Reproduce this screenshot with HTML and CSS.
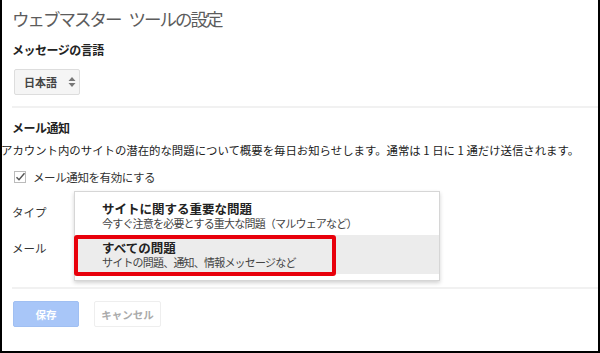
FILE: index.html
```html
<!DOCTYPE html>
<html lang="ja">
<head>
<meta charset="utf-8">
<link rel="stylesheet" href="styles.css">
</head>
<body>
<div class="frame">
  <div class="content">
    <h1 class="title">ウェブマスター ツールの設定</h1>
    <div class="label lang-label">メッセージの言語</div>
    <div class="select">
      <span>日本語</span>
      <svg class="arrows" width="8" height="12" viewBox="0 0 8 12"><path d="M4 1 L7.5 5 H0.5 Z M4 11 L7.5 7 H0.5 Z" fill="#777"/></svg>
    </div>
    <div class="rule rule-top"></div>
    <div class="label notify-label">メール通知</div>
    <p class="desc">アカウント内のサイトの潜在的な問題について概要を毎日お知らせします。通常は 1 日に 1 通だけ送信されます。</p>
    <div class="check-row">
      <svg class="check" width="12" height="12" viewBox="0 0 12 12"><rect x="0.5" y="0.5" width="11" height="11" fill="#fff" stroke="#bbb"/><path d="M2.5 6.2 L5 8.8 L10.5 2.2" fill="none" stroke="#555" stroke-width="1.4"/></svg>
      <span>メール通知を有効にする</span>
    </div>
    <div class="field type-row">タイプ</div>
    <div class="field mail-row">メール</div>
    <div class="rule rule-bottom"></div>
    <div class="buttons">
      <button class="btn save">保存</button>
      <button class="btn cancel">キャンセル</button>
    </div>
  </div>
  <div class="menu">
    <div class="item">
      <div class="item-title">サイトに関する重要な問題</div>
      <div class="item-sub">今すぐ注意を必要とする重大な問題（マルウェアなど）</div>
    </div>
    <div class="item active">
      <div class="item-title">すべての問題</div>
      <div class="item-sub">サイトの問題、通知、情報メッセージなど</div>
    </div>
  </div>
  <div class="highlight"></div>
</div>
</body>
</html>
```

FILE: styles.css
```css
html, body {
  margin: 0;
  padding: 0;
  background: #fff;
}
body {
  font-family: "Noto Sans CJK JP", "Noto Sans", sans-serif;
  color: #222;
}
.frame {
  position: relative;
  width: 600px;
  height: 353px;
  box-sizing: border-box;
  border-left: 2px solid #000;
  border-right: 2px solid #000;
  border-bottom: 2px solid #000;
  overflow: hidden;
}
.content {
  padding-left: 10px;
}
.title {
  margin: 0;
  height: 38px;
  line-height: 38px;
  font-size: 17.5px;
  font-weight: 400;
  letter-spacing: -2px;
  word-spacing: 6px;
  color: #5c5c5c;
}
.label {
  height: 20px;
  line-height: 20px;
  font-size: 12px;
  font-weight: 700;
  letter-spacing: -0.5px;
  color: #222;
}
.lang-label {
  margin-top: 2px;
}
.select {
  margin-top: 9px;
  margin-left: 2px;
  width: 66px;
  height: 26px;
  box-sizing: border-box;
  border: 1px solid #ddd;
  border-radius: 2px;
  background: #f5f5f5;
  display: flex;
  align-items: center;
  padding-left: 9px;
  font-size: 11px;
  font-weight: 700;
  color: #444;
}
.arrows {
  margin-left: 11px;
}
.rule {
  height: 2px;
  background: #f1f1f1;
}
.rule-top {
  margin-top: 11px;
}
.notify-label {
  margin-top: 10px;
}
.desc {
  margin: 2px 0 0 -11px;
  height: 20px;
  line-height: 20px;
  font-size: 11.4px;
  color: #222;
  white-space: nowrap;
}
.check-row {
  margin-top: 7px;
  height: 20px;
  display: flex;
  align-items: center;
  margin-left: 2px;
  font-size: 11.5px;
  letter-spacing: -0.4px;
  color: #333;
}
.check {
  margin-right: 7px;
}
.field {
  height: 20px;
  line-height: 20px;
  font-size: 11.5px;
  color: #333;
}
.type-row {
  margin-top: 15px;
}
.mail-row {
  margin-top: 16px;
}
.rule-bottom {
  margin-top: 29px;
}
.buttons {
  margin-top: 12px;
  display: flex;
  gap: 15px;
  margin-left: 1px;
}
.btn {
  height: 26px;
  box-sizing: border-box;
  border-radius: 2px;
  font-family: "Noto Sans CJK JP", sans-serif;
  font-size: 10.5px;
  font-weight: 700;
  padding: 0;
}
.save {
  width: 66px;
  background: #a8c6f8;
  border: 1px solid #a0bff2;
  color: #fff;
}
.cancel {
  width: 67px;
  background: #fff;
  border: 1px solid #eee;
  color: #aaa;
}
.menu {
  position: absolute;
  left: 72px;
  top: 191px;
  width: 366px;
  height: 90px;
  box-sizing: border-box;
  background: #fff;
  border: 1px solid #d6d6d6;
  box-shadow: 0 2px 4px rgba(0,0,0,0.18);
  padding-top: 9px;
}
.item {
  padding: 0 0 4px 27px;
}
.item.active {
  background: #ececec;
  padding-top: 5px;
  padding-bottom: 4px;
}
.item-title {
  height: 15px;
  line-height: 15px;
  font-size: 12.5px;
  font-weight: 700;
  color: #222;
}
.item-sub {
  height: 15px;
  line-height: 15px;
  font-size: 11px;
  letter-spacing: -0.8px;
  color: #444;
}
.highlight {
  position: absolute;
  left: 72px;
  top: 235px;
  width: 262px;
  height: 41px;
  box-sizing: border-box;
  border: 4px solid #e8000b;
  border-radius: 3px;
}
```
